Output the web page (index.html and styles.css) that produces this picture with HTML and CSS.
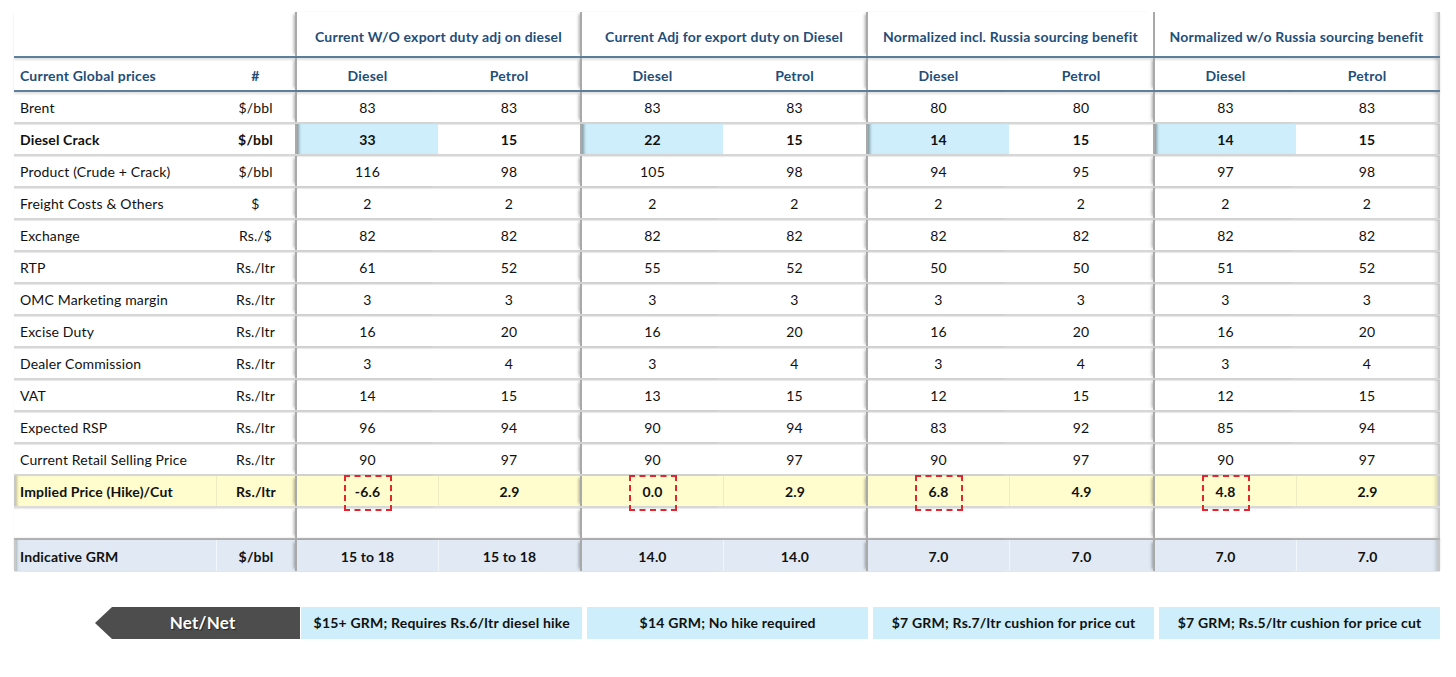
FILE: index.html
```html
<!DOCTYPE html>
<html>
<head>
<meta charset="utf-8">
<link rel="stylesheet" href="styles.css">
</head>
<body>
<div class="sheet">
  <div class="row head1">
    <div class="c span2"></div>
    <div class="c g gt">Current W/O export duty adj on diesel</div>
    <div class="c g gt">Current Adj for export duty on Diesel</div>
    <div class="c g gt">Normalized incl. Russia sourcing benefit</div>
    <div class="c g gt end">Normalized w/o Russia sourcing benefit</div>
  </div>
  <div class="row head2">
    <div class="c lbl">Current Global prices</div>
    <div class="c u">#</div>
    <div class="c g">Diesel</div><div class="c">Petrol</div>
    <div class="c g">Diesel</div><div class="c">Petrol</div>
    <div class="c g">Diesel</div><div class="c">Petrol</div>
    <div class="c g">Diesel</div><div class="c end">Petrol</div>
  </div>
  <div class="row">
    <div class="c lbl">Brent</div><div class="c u">$/bbl</div>
    <div class="c g">83</div><div class="c">83</div>
    <div class="c g">83</div><div class="c">83</div>
    <div class="c g">80</div><div class="c">80</div>
    <div class="c g">83</div><div class="c end">83</div>
  </div>
  <div class="row bold crack">
    <div class="c lbl">Diesel Crack</div><div class="c u">$/bbl</div>
    <div class="c g hl">33</div><div class="c">15</div>
    <div class="c g hl">22</div><div class="c">15</div>
    <div class="c g hl">14</div><div class="c">15</div>
    <div class="c g hl">14</div><div class="c end">15</div>
  </div>
  <div class="row">
    <div class="c lbl">Product (Crude + Crack)</div><div class="c u">$/bbl</div>
    <div class="c g">116</div><div class="c">98</div>
    <div class="c g">105</div><div class="c">98</div>
    <div class="c g">94</div><div class="c">95</div>
    <div class="c g">97</div><div class="c end">98</div>
  </div>
  <div class="row">
    <div class="c lbl">Freight Costs &amp; Others</div><div class="c u">$</div>
    <div class="c g">2</div><div class="c">2</div>
    <div class="c g">2</div><div class="c">2</div>
    <div class="c g">2</div><div class="c">2</div>
    <div class="c g">2</div><div class="c end">2</div>
  </div>
  <div class="row">
    <div class="c lbl">Exchange</div><div class="c u">Rs./$</div>
    <div class="c g">82</div><div class="c">82</div>
    <div class="c g">82</div><div class="c">82</div>
    <div class="c g">82</div><div class="c">82</div>
    <div class="c g">82</div><div class="c end">82</div>
  </div>
  <div class="row">
    <div class="c lbl">RTP</div><div class="c u">Rs./ltr</div>
    <div class="c g">61</div><div class="c">52</div>
    <div class="c g">55</div><div class="c">52</div>
    <div class="c g">50</div><div class="c">50</div>
    <div class="c g">51</div><div class="c end">52</div>
  </div>
  <div class="row">
    <div class="c lbl">OMC Marketing margin</div><div class="c u">Rs./ltr</div>
    <div class="c g">3</div><div class="c">3</div>
    <div class="c g">3</div><div class="c">3</div>
    <div class="c g">3</div><div class="c">3</div>
    <div class="c g">3</div><div class="c end">3</div>
  </div>
  <div class="row">
    <div class="c lbl">Excise Duty</div><div class="c u">Rs./ltr</div>
    <div class="c g">16</div><div class="c">20</div>
    <div class="c g">16</div><div class="c">20</div>
    <div class="c g">16</div><div class="c">20</div>
    <div class="c g">16</div><div class="c end">20</div>
  </div>
  <div class="row">
    <div class="c lbl">Dealer Commission</div><div class="c u">Rs./ltr</div>
    <div class="c g">3</div><div class="c">4</div>
    <div class="c g">3</div><div class="c">4</div>
    <div class="c g">3</div><div class="c">4</div>
    <div class="c g">3</div><div class="c end">4</div>
  </div>
  <div class="row">
    <div class="c lbl">VAT</div><div class="c u">Rs./ltr</div>
    <div class="c g">14</div><div class="c">15</div>
    <div class="c g">13</div><div class="c">15</div>
    <div class="c g">12</div><div class="c">15</div>
    <div class="c g">12</div><div class="c end">15</div>
  </div>
  <div class="row">
    <div class="c lbl">Expected RSP</div><div class="c u">Rs./ltr</div>
    <div class="c g">96</div><div class="c">94</div>
    <div class="c g">90</div><div class="c">94</div>
    <div class="c g">83</div><div class="c">92</div>
    <div class="c g">85</div><div class="c end">94</div>
  </div>
  <div class="row">
    <div class="c lbl">Current Retail Selling Price</div><div class="c u">Rs./ltr</div>
    <div class="c g">90</div><div class="c">97</div>
    <div class="c g">90</div><div class="c">97</div>
    <div class="c g">90</div><div class="c">97</div>
    <div class="c g">90</div><div class="c end">97</div>
  </div>
  <div class="row bold implied">
    <div class="c lbl edge">Implied Price (Hike)/Cut</div><div class="c u sub">Rs./ltr</div>
    <div class="c g"><span class="mark"></span>-6.6</div><div class="c sub">2.9</div>
    <div class="c g"><span class="mark"></span>0.0</div><div class="c sub">2.9</div>
    <div class="c g"><span class="mark"></span>6.8</div><div class="c sub">4.9</div>
    <div class="c g"><span class="mark"></span>4.8</div><div class="c sub end">2.9</div>
  </div>
  <div class="row blank">
    <div class="c"></div><div class="c"></div>
    <div class="c g"></div><div class="c"></div>
    <div class="c g"></div><div class="c"></div>
    <div class="c g"></div><div class="c"></div>
    <div class="c g"></div><div class="c end"></div>
  </div>
  <div class="row bold grm">
    <div class="c lbl edge">Indicative GRM</div><div class="c u sub">$/bbl</div>
    <div class="c g">15 to 18</div><div class="c sub">15 to 18</div>
    <div class="c g">14.0</div><div class="c sub">14.0</div>
    <div class="c g">7.0</div><div class="c sub">7.0</div>
    <div class="c g">7.0</div><div class="c sub end">7.0</div>
  </div>

  <div class="netrow">
    <div class="netnet">Net/Net</div>
    <div class="note">$15+ GRM; Requires Rs.6/ltr diesel hike</div>
    <div class="note">$14 GRM; No hike required</div>
    <div class="note">$7 GRM; Rs.7/ltr cushion for price cut</div>
    <div class="note">$7 GRM; Rs.5/ltr cushion for price cut</div>
  </div>
</div>
</body>
</html>
```

FILE: styles.css
```css
html, body {
  margin: 0;
  padding: 0;
  background: #ffffff;
}

body {
  font-family: Lato, "Open Sans", "DejaVu Sans", sans-serif;
  font-size: 14px;
  letter-spacing: 0.15px;
  color: #111111;
}

.sheet {
  padding: 12px 0 0 14px;
  width: 1426px;
}

.row {
  display: grid;
  grid-template-columns: 202px 79px 143px 142px 143px 143px 143px 144px 143px 144px;
  height: 32px;
  box-sizing: border-box;
  border-bottom: 2px solid #d6d6d6;
  box-shadow: 0 1px 1px rgba(0, 0, 0, 0.08);
}

.c {
  display: flex;
  align-items: center;
  justify-content: center;
  position: relative;
  white-space: nowrap;
  padding-top: 1px;
  box-sizing: border-box;
}

.lbl {
  justify-content: flex-start;
  padding-left: 6px;
}

.u {
  justify-content: center;
}

.g {
  border-left: 2px solid #a9a9a9;
  box-shadow: -3px 0 3px -2px rgba(0, 0, 0, 0.35);
}

.end {
  border-right: 2px solid #c8c8c8;
  box-shadow: inset -6px 0 4px -4px rgba(0, 0, 0, 0.18);
}

.span2 {
  grid-column: span 2;
}

.gt {
  grid-column: span 2;
}

.head1 {
  height: 46px;
  border-bottom: 2px solid #5f7f9f;
  box-shadow: 0 2px 2px rgba(0, 0, 0, 0.12);
  font-weight: 700;
  letter-spacing: 0.2px;
  color: #1f4e79;
}

.head1 .c {
  padding-top: 5px;
}

.head2 {
  height: 34px;
  border-bottom: 2px solid #5f7f9f;
  box-shadow: 0 2px 2px rgba(0, 0, 0, 0.12);
  font-weight: 700;
  letter-spacing: 0.2px;
  color: #1f4e79;
}

.head2 .c {
  padding-top: 3px;
}

.bold {
  font-weight: 700;
}

.crack .hl {
  background: #cdeefa;
  box-shadow: inset 4px 0 3px -2px rgba(0, 0, 0, 0.35);
}

.implied {
  background: #fffccd;
  border-bottom-color: #dcdcdc;
}

.implied .sub {
  border-left: 1px solid #ecebc2;
}

.grm {
  background: #e1eaf4;
  border-top: 0;
  border-bottom: 1px solid #e6e6e6;
  box-shadow: 0 -2px 2px rgba(0, 0, 0, 0.12);
}

.grm .sub {
  border-left: 1px solid #f2f6fa;
}

.blank {
  border-bottom: 2px solid #c4c4c4;
}

.edge {
  border-left: 2px solid #c8c8c8;
  padding-left: 4px;
  box-shadow: inset 3px 0 3px -2px rgba(0, 0, 0, 0.25);
}

.mark {
  position: absolute;
  left: 50%;
  top: -1px;
  width: 48px;
  height: 36px;
  margin-left: -24px;
  box-sizing: border-box;
  border: 2px dashed #e3262b;
}

.netrow {
  display: flex;
  align-items: stretch;
  gap: 5px;
  height: 32px;
  margin-top: 35px;
  padding-left: 81px;
  font-weight: 700;
  font-size: 14px;
  letter-spacing: 0.2px;
}

.netnet {
  width: 206px;
  margin-right: -4px;
  background: #4d4d4d;
  clip-path: polygon(17px 0, 100% 0, 100% 100%, 17px 100%, 0 50%);
  color: #ffffff;
  font-size: 17px;
  display: flex;
  align-items: center;
  justify-content: center;
  padding-left: 10px;
  padding-bottom: 1px;
  box-sizing: border-box;
  text-shadow: 1px 1px 1px #222222;
}

.note {
  width: 282px;
  background: #cdeefa;
  display: flex;
  align-items: center;
  justify-content: center;
  padding-bottom: 2px;
  box-sizing: border-box;
  color: #111111;
}
```
